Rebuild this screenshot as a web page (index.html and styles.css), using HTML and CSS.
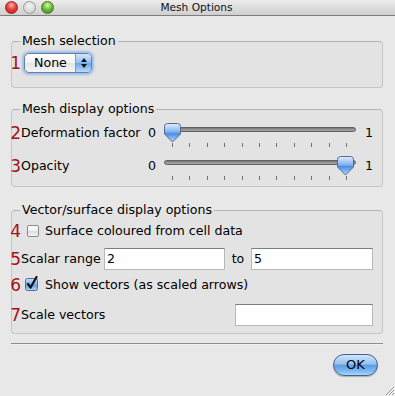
FILE: index.html
```html
<!DOCTYPE html>
<html>
<head>
<meta charset="utf-8">
<link rel="stylesheet" href="styles.css">
</head>
<body>
<div class="window">
  <div class="titlebar">
    <div class="lights">
      <span class="light red"></span>
      <span class="light gray"></span>
      <span class="light green"></span>
    </div>
    <div class="title">Mesh Options</div>
  </div>
  <div class="content">
    <fieldset class="group g1">
      <legend>Mesh selection</legend>
      <div class="row">
        <span class="num">1</span>
        <div class="popup">
          <span class="popup-text">None</span>
          <span class="popup-arrows">
            <svg width="8" height="12" viewBox="0 0 8 12"><path d="M4 1 L7 5 H1 Z M4 11 L7 7 H1 Z" fill="#111"/></svg>
          </span>
        </div>
      </div>
    </fieldset>

    <fieldset class="group g2">
      <legend>Mesh display options</legend>
      <div class="srow">
        <span class="num">2</span>
        <span class="slabel">Deformation factor</span>
        <span class="smin">0</span>
        <div class="slider">
          <div class="track"></div>
          <svg class="thumb thumb-left" width="17" height="20" viewBox="0 0 17 20"><defs><linearGradient id="tg1" x1="0" y1="0" x2="0" y2="1"><stop offset="0" stop-color="#e4efff"/><stop offset="0.45" stop-color="#7fb3ef"/><stop offset="0.55" stop-color="#4c8ee3"/><stop offset="1" stop-color="#b5dcff"/></linearGradient></defs><path d="M3.5 0.5 H13.5 A3 3 0 0 1 16.5 3.5 V11 L8.5 19 L0.5 11 V3.5 A3 3 0 0 1 3.5 0.5 Z" fill="url(#tg1)" stroke="#56698f"/></svg>
          <div class="ticks"><i></i><i></i><i></i><i></i><i></i><i></i><i></i><i></i><i></i><i></i><i></i></div>
        </div>
        <span class="smax">1</span>
      </div>
      <div class="srow">
        <span class="num">3</span>
        <span class="slabel">Opacity</span>
        <span class="smin">0</span>
        <div class="slider">
          <div class="track"></div>
          <svg class="thumb thumb-right" width="17" height="20" viewBox="0 0 17 20"><defs><linearGradient id="tg2" x1="0" y1="0" x2="0" y2="1"><stop offset="0" stop-color="#e4efff"/><stop offset="0.45" stop-color="#7fb3ef"/><stop offset="0.55" stop-color="#4c8ee3"/><stop offset="1" stop-color="#b5dcff"/></linearGradient></defs><path d="M3.5 0.5 H13.5 A3 3 0 0 1 16.5 3.5 V11 L8.5 19 L0.5 11 V3.5 A3 3 0 0 1 3.5 0.5 Z" fill="url(#tg2)" stroke="#56698f"/></svg>
          <div class="ticks"><i></i><i></i><i></i><i></i><i></i><i></i><i></i><i></i><i></i><i></i><i></i></div>
        </div>
        <span class="smax">1</span>
      </div>
    </fieldset>

    <fieldset class="group g3">
      <legend>Vector/surface display options</legend>
      <div class="row r4">
        <span class="num">4</span>
        <span class="check"></span>
        <span class="clabel">Surface coloured from cell data</span>
      </div>
      <div class="row r5">
        <span class="num">5</span>
        <span class="tlabel">Scalar range</span>
        <span class="field f1">2</span>
        <span class="to">to</span>
        <span class="field f2">5</span>
      </div>
      <div class="row r6">
        <span class="num">6</span>
        <svg class="checked" width="15" height="15" viewBox="0 0 15 15"><defs><linearGradient id="cb" x1="0" y1="0" x2="0" y2="1"><stop offset="0" stop-color="#c9e0f8"/><stop offset="0.5" stop-color="#7fb0e8"/><stop offset="0.55" stop-color="#5f9be3"/><stop offset="1" stop-color="#b9dcfb"/></linearGradient></defs><rect x="0.5" y="2.5" width="12" height="12" rx="2" fill="url(#cb)" stroke="#4f6d9c"/><path d="M3 8 L5.6 11.5 L11.5 1" fill="none" stroke="#111" stroke-width="2.2" stroke-linecap="round" stroke-linejoin="round"/></svg>
        <span class="clabel">Show vectors (as scaled arrows)</span>
      </div>
      <div class="row r7">
        <span class="num">7</span>
        <span class="tlabel grow">Scale vectors</span>
        <span class="field f3"></span>
      </div>
    </fieldset>

    <div class="separator"></div>
    <div class="buttons">
      <div class="okbtn">OK</div>
    </div>
  </div>
  <svg class="grip" width="12" height="12" viewBox="0 0 12 12"><path d="M11 3 L3 11 M11 6 L6 11 M11 9 L9 11" stroke="#9a9a9a" stroke-width="1"/><path d="M12 4 L4 12 M12 7 L7 12 M12 10 L10 12" stroke="#ffffff" stroke-width="1"/></svg>
</div>
</body>
</html>
```

FILE: styles.css
```css
html, body {
  margin: 0;
  padding: 0;
}
body {
  background: #e8e8e8;
  font-family: "DejaVu Sans", "Liberation Sans", sans-serif;
  font-size: 12.6px;
  color: #000;
}
.window {
  position: relative;
  width: 395px;
  height: 396px;
  overflow: hidden;
  background: #e8e8e8;
}
.titlebar {
  position: relative;
  height: 15px;
  border-bottom: 1px solid #7d7d7d;
  background: linear-gradient(#ececec, #cfcfcf);
  display: flex;
  align-items: center;
  justify-content: center;
}
.lights {
  position: absolute;
  left: 5px;
  top: 0;
  height: 15px;
  display: flex;
  align-items: center;
  gap: 5px;
}
.light {
  width: 13px;
  height: 13px;
  border-radius: 50%;
  box-sizing: border-box;
}
.light.red {
  background: radial-gradient(circle at 50% 30%, #ffb0a8 0%, #e8423a 45%, #b4140e 100%);
  border: 1px solid #8c2a25;
}
.light.gray {
  background: radial-gradient(circle at 50% 35%, #f4f4f4 0%, #dadada 60%, #c8c8c8 100%);
  border: 1px solid #9a9a9a;
}
.light.green {
  background: radial-gradient(circle at 50% 30%, #d8f8b0 0%, #6ebd3c 45%, #3a8a14 100%);
  border: 1px solid #3e7a22;
}
.title {
  font-size: 10.6px;
  line-height: 15px;
  color: #111;
  margin-left: -2px;
}
.content {
  padding: 0 12px 0 11px;
}
.group {
  margin: 0;
  padding: 0 9px 0 0;
  border: 1px solid #c6c6c6;
  border-top-color: #b2b2b2;
  border-radius: 4px;
  background: #e3e3e3;
  min-inline-size: 0;
}
.group legend {
  margin-left: 8px;
  padding: 0 2px;
  line-height: 16px;
  font-size: 12.6px;
}
.g1 {
  margin-top: 17px;
  padding-top: 4px;
  padding-bottom: 14px;
}
.g2 {
  margin-top: 13px;
  padding-top: 5px;
  padding-bottom: 5px;
}
.g3 {
  margin-top: 15px;
  padding-top: 3px;
  padding-bottom: 7px;
}
.row {
  display: flex;
  align-items: center;
}
.num {
  width: 11px;
  margin-left: -2px;
  color: #a5121b;
  font-size: 17px;
  line-height: 20px;
  text-align: right;
  flex: none;
}
.popup {
  margin-left: 3px;
  width: 68px;
  height: 20px;
  box-sizing: border-box;
  border: 1px solid #5b7fb6;
  border-radius: 5px;
  box-shadow: 0 0 2px 2px rgba(110, 160, 230, 0.55);
  display: flex;
  overflow: hidden;
  background: linear-gradient(#ffffff, #f2f2f2 50%, #e4e4e4 51%, #f6f6f6);
}
.popup-text {
  flex: 1;
  padding-left: 9px;
  line-height: 18px;
  font-size: 12.6px;
}
.popup-arrows {
  width: 15px;
  display: flex;
  align-items: center;
  justify-content: center;
  border-left: 1px solid #7c9bc9;
  background: linear-gradient(#d3e6fb, #8fbdf0 50%, #6aa5ea 51%, #b6dafc);
}
.srow {
  display: flex;
  align-items: flex-start;
  height: 26px;
}
.srow + .srow {
  margin-top: 7px;
}
.srow .num {
  margin-top: 1px;
}
.slabel {
  flex: 1;
  line-height: 20px;
  margin-top: 1px;
}
.smin, .smax {
  line-height: 20px;
  margin-top: 1px;
}
.smin {
  margin-right: 8px;
}
.smax {
  margin-left: 9px;
}
.slider {
  position: relative;
  width: 192px;
  height: 26px;
  flex: none;
}
.track {
  margin-top: 5px;
  height: 5px;
  box-sizing: border-box;
  border-radius: 3px;
  border: 1px solid #5f5f5f;
  background: linear-gradient(#7a7a7a, #a9a9a9);
}
.thumb {
  position: absolute;
  top: 1px;
}
.thumb-left {
  left: 0;
}
.thumb-right {
  right: 2px;
}
.ticks {
  display: flex;
  justify-content: space-between;
  padding: 0 9px 0 8px;
  margin-top: 11px;
}
.ticks i {
  display: block;
  width: 1px;
  height: 4px;
  background: #707070;
}
.r4 {
  height: 20px;
}
.check {
  margin-left: 6px;
  width: 12px;
  height: 12px;
  box-sizing: border-box;
  border: 1px solid #8b8b8b;
  border-radius: 2px;
  background: linear-gradient(#ffffff, #f1f1f1 50%, #dedede 55%, #f3f3f3);
  flex: none;
}
.clabel {
  margin-left: 6px;
  line-height: 20px;
}
.r5 {
  margin-top: 7px;
  height: 22px;
}
.tlabel {
  width: 83px;
  line-height: 20px;
  flex: none;
}
.tlabel.grow {
  flex: 1;
}
.field {
  height: 22px;
  box-sizing: border-box;
  background: #fff;
  border: 1px solid #b8b8b8;
  border-top-color: #7e7e7e;
  padding-left: 2px;
  line-height: 20px;
  flex: none;
}
.f1 {
  width: 121px;
}
.f2 {
  width: 122px;
}
.f3 {
  width: 138px;
}
.to {
  flex: 1;
  text-align: center;
  line-height: 20px;
}
.r6 {
  margin-top: 5px;
  height: 20px;
}
.checked {
  margin-left: 4px;
  margin-top: -3px;
  flex: none;
}
.r6 .clabel {
  margin-left: 5px;
}
.r7 {
  margin-top: 9px;
  height: 22px;
}
.separator {
  margin-top: 9px;
  height: 1px;
  background: #8e8e8e;
  border-bottom: 1px solid #f2f2f2;
}
.buttons {
  display: flex;
  justify-content: flex-end;
  margin-top: 9px;
  padding-right: 5px;
}
.okbtn {
  width: 45px;
  height: 22px;
  box-sizing: border-box;
  border: 1px solid #42628f;
  border-radius: 11px;
  background: linear-gradient(#cfe5fb 0%, #93c1ef 45%, #5d9ce6 52%, #7cb8f0 80%, #a9d6fb 100%);
  text-align: center;
  line-height: 20px;
  font-size: 13px;
  box-shadow: 0 1px 1px rgba(0, 0, 0, 0.25);
}
.grip {
  position: absolute;
  right: 0;
  bottom: 0;
}
```
